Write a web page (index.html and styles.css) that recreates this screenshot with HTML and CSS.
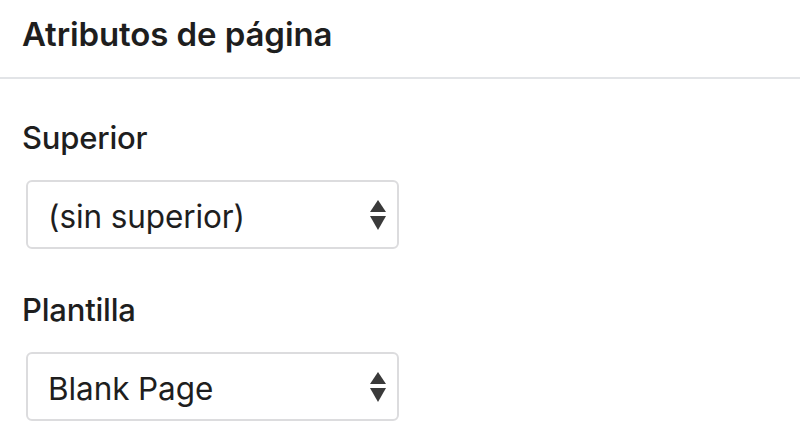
FILE: index.html
```html
<!DOCTYPE html>
<html lang="es">
<head>
<meta charset="utf-8">
<title>Atributos de página</title>
<link rel="stylesheet" href="styles.css">
</head>
<body>
<div class="panel">
  <div class="panel-header">Atributos de página</div>
  <div class="panel-body">
    <div class="field">
      <div class="label">Superior</div>
      <div class="select">
        <span class="select-text">(sin superior)</span>
        <svg class="arrows" width="16" height="30" viewBox="0 0 16 30"><polygon points="8,0 0,12 16,12" fill="#3a3a3a"/><polygon points="0,16 16,16 8,30" fill="#3a3a3a"/></svg>
      </div>
    </div>
    <div class="field">
      <div class="label">Plantilla</div>
      <div class="select">
        <span class="select-text">Blank Page</span>
        <svg class="arrows" width="16" height="30" viewBox="0 0 16 30"><polygon points="8,0 0,12 16,12" fill="#3a3a3a"/><polygon points="0,16 16,16 8,30" fill="#3a3a3a"/></svg>
      </div>
    </div>
  </div>
</div>
</body>
</html>
```
FILE: styles.css
```css
html, body {
  margin: 0;
  padding: 0;
  background: #ffffff;
}
body {
  font-family: Inter, "Liberation Sans", sans-serif;
  color: #1e1e1e;
}
.panel-header {
  height: 79px;
  box-sizing: border-box;
  padding: 0 22px 9px 22px;
  display: flex;
  align-items: center;
  border-bottom: 2px solid #e2e4e7;
  font-size: 33px;
  font-weight: 600;
  letter-spacing: -0.1px;
}
.panel-body {
  padding: 41px 22px 0 22px;
}
.field + .field {
  margin-top: 43px;
}
.label {
  font-size: 31px;
  font-weight: 500;
  line-height: 36px;
  letter-spacing: -0.2px;
}
.select {
  margin: 24px 0 0 4px;
  width: 373px;
  height: 69px;
  box-sizing: border-box;
  border: 2px solid #dcdcde;
  border-radius: 6px;
  display: flex;
  align-items: center;
  justify-content: space-between;
  padding: 4px 11px 0 20px;
  font-size: 31.5px;
  font-weight: 400;
  letter-spacing: -0.1px;
}
.arrows {
  display: block;
  margin-top: -4px;
}
```
